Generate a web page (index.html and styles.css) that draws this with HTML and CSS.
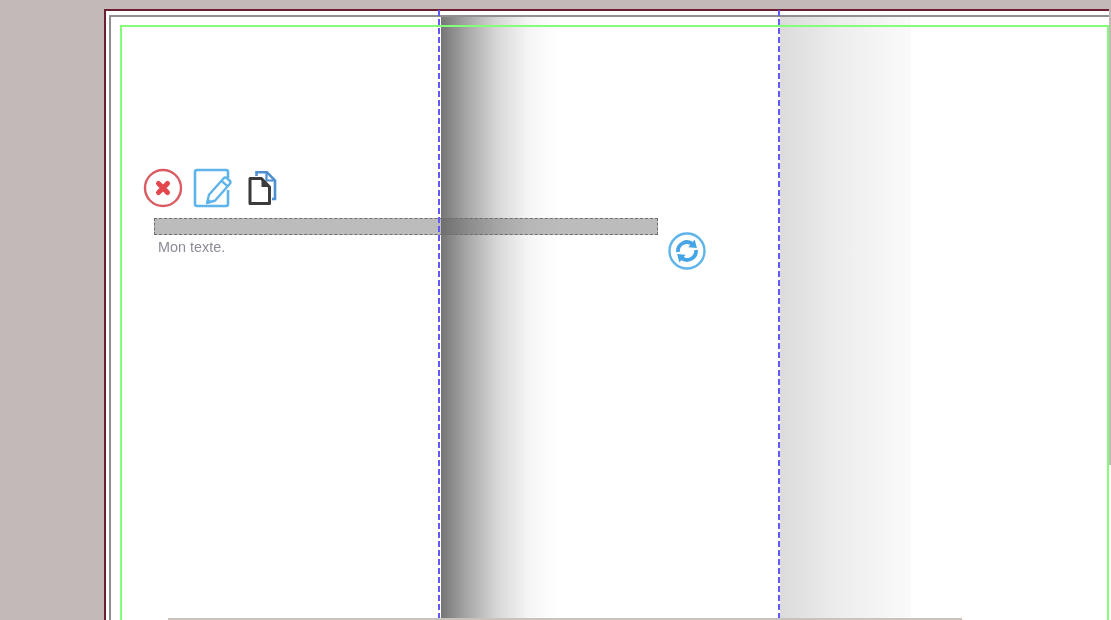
FILE: index.html
```html
<!DOCTYPE html>
<html lang="fr">
<head>
<meta charset="utf-8">
<title>Mon texte</title>
<link rel="stylesheet" href="styles.css">
</head>
<body>
<main class="sheet">
  <div class="fold fold-a"></div>
  <div class="fold fold-b"></div>
  <div class="trim">
    <div class="safe">
      <div class="toolbar">
        <button class="tool tool-close" aria-label="Supprimer">
          <svg width="40" height="40" viewBox="0 0 40 40"><circle cx="20" cy="20" r="18" fill="none" stroke="#db5b63" stroke-width="2.400"/><path d="M15.500 15.500l9 9M24.500 15.500l-9 9" stroke="#e3474d" stroke-width="5" stroke-linecap="round"/></svg>
        </button>
        <button class="tool tool-edit" aria-label="Modifier">
          <svg width="40" height="40" viewBox="0 0 40 40"><path d="M35 22V36a2 2 0 0 1-2 2H4a2 2 0 0 1-2-2V4a2 2 0 0 1 2-2h29a2 2 0 0 1 2 2v6" fill="none" stroke="#5fb4ea" stroke-width="2.600"/><path d="M30.500 10.500a2.500 2.500 0 0 1 3.500-.2l2.500 2.200a2.500 2.500 0 0 1 .2 3.500l-2 2.300-6.200-5.500zM28.500 12.800l6.200 5.500-12.500 14.200-8.200 2.500 2-8.200z" fill="#fff" stroke="#5fb4ea" stroke-width="2.400" stroke-linejoin="round"/><path d="M14 35l1-4.500 3.500 3.100z" fill="#5fb4ea"/></svg>
        </button>
        <button class="tool tool-copy" aria-label="Dupliquer">
          <svg width="32" height="36" viewBox="0 0 32 36"><path d="M9.500 7V3.200h10.500l8 8.300V30H25" fill="none" stroke="#4f8fcf" stroke-width="2.600"/><path d="M19.500 3v8.500H28" fill="none" stroke="#4f8fcf" stroke-width="2.200"/><path d="M3 9.500h11.500l8 8.500v16.500H3z" fill="#fff" stroke="#3b3b3b" stroke-width="3" stroke-linejoin="round"/><path d="M14.500 9.500v8.500H22.500z" fill="#3b3b3b"/></svg>
        </button>
      </div>
      <div class="textblock">
        <div class="bar"></div>
        <p class="label">Mon texte.</p>
      </div>
      <button class="tool tool-refresh" aria-label="Actualiser">
        <svg width="38" height="38" viewBox="0 0 38 38"><circle cx="19" cy="19" r="17.500" fill="none" stroke="#5fb4ea" stroke-width="2.400"/><path d="M10 20a9 9 0 0 1 15-7.500" fill="none" stroke="#45a5e6" stroke-width="3.800"/><path d="M26.700 7.600L20.300 15.300 28.900 16z" fill="#45a5e6"/><path d="M28 18a9 9 0 0 1-15 7.500" fill="none" stroke="#45a5e6" stroke-width="3.800"/><path d="M11.300 30.400L17.700 22.700 9.100 22z" fill="#45a5e6"/></svg>
      </button>
    </div>
  </div>
  <div class="guide guide-a"></div>
  <div class="guide guide-b"></div>
</main>
<div class="edge-low"></div>
<div class="footer-line"></div>
</body>
</html>
```
FILE: styles.css
```css
html, body {
  margin: 0;
  height: 620px;
  overflow: hidden;
  background: #c4b9b9;
  font-family: "Liberation Sans", Arial, sans-serif;
}

.sheet {
  position: absolute;
  left: 104px;
  top: 9px;
  width: 1005px;
  height: 620px;
  box-sizing: border-box;
  background: #fff;
  border-top: 2px solid #6c1f30;
  border-left: 2px solid #6c1f30;
  padding: 3.500px 0 0 3px;
  filter: blur(.55px);
}

.trim {
  position: relative;
  height: 100%;
  box-sizing: border-box;
  border-top: 2px solid #8f8f8f;
  border-left: 2px solid #8f8f8f;
  padding: 8px 0 0 9px;
}

.safe {
  position: relative;
  height: 100%;
  box-sizing: border-box;
  border-top: 2px solid #84ff78;
  border-left: 2px solid #84ff78;
  border-right: 2px solid #84ff78;
}

.tool {
  display: block;
  padding: 0;
  border: 0;
  background: none;
  line-height: 0;
}

.toolbar {
  position: absolute;
  left: 21px;
  top: 141px;
  display: flex;
  align-items: center;
  gap: 10px;
}

.tool-copy { margin-left: 4px; margin-top: -2px; }

.textblock {
  position: absolute;
  left: 32px;
  top: 191px;
  width: 504px;
}

.bar {
  height: 17px;
  box-sizing: border-box;
  background: rgba(100, 100, 100, .43);
  border: 1px dashed #6f6f6f;
}

.label {
  margin: 4px 0 0 4px;
  font-size: 14.400px;
  line-height: 16px;
  color: #8c8a96;
}

.tool-refresh {
  position: absolute;
  left: 546px;
  top: 205px;
}

.fold {
  position: absolute;
  top: 6px;
  bottom: 0;
}

.fold-a {
  left: 335px;
  width: 118px;
  background: linear-gradient(to right, rgba(0,0,0,.54), rgba(0,0,0,.36) 20%, rgba(0,0,0,.16) 47%, rgba(0,0,0,.04) 74%, rgba(0,0,0,0));
}

.fold-b {
  left: 674px;
  width: 131px;
  background: linear-gradient(to right, rgba(0,0,0,.14), rgba(0,0,0,.07) 45%, rgba(0,0,0,.02));
}

.guide {
  position: absolute;
  top: -1px;
  bottom: 0;
  width: 2px;
  background: repeating-linear-gradient(to bottom, #6358f8 0 6px, transparent 6px 9px);
}

.guide-a { left: 332px; }
.guide-b { left: 672px; }

.edge-low {
  position: absolute;
  left: 1109px;
  top: 465px;
  width: 2px;
  height: 155px;
  background: #fff;
}

.footer-line {
  position: absolute;
  left: 168px;
  top: 618px;
  width: 794px;
  height: 2px;
  background: #c9c2bd;
}
```
